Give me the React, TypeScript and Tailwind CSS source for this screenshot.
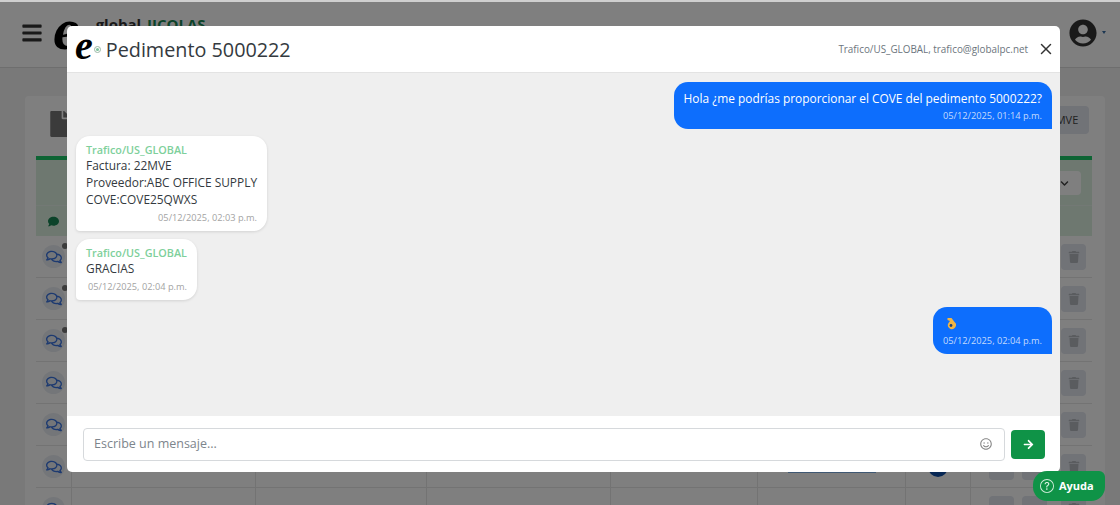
import React from "react";
import { FaBars, FaUserCircle, FaRegComments, FaTrash, FaComment, FaFile, FaArrowRight, FaRegSmile, FaChevronDown } from "react-icons/fa";
import { BsQuestionCircle } from "react-icons/bs";
import { X } from "lucide-react";

const font = { fontFamily: '"Open Sans","Noto Sans",sans-serif' };

function Logo({ cls }: { cls: string }) {
  return <span className={"font-['Liberation_Serif'] italic font-bold leading-none text-black " + cls}>e</span>;
}

function Action({ hidden }: { hidden?: boolean }) {
  return (
    <span className="flex h-[26px] w-[25px] items-center justify-center rounded-[4px] bg-[#e2e6ee] text-[#b4b8be]">
      {!hidden && <FaTrash size={12} />}
    </span>
  );
}

function Row({ dot, badge }: { dot?: boolean; badge?: boolean }) {
  return (
    <div className="grid h-[42px] shrink-0 grid-cols-[35px_184px_171px_184px_147px_148px_65px_1fr] border-b border-[#e6e6e6]">
      <div className="relative flex items-center justify-center">
        <div className="flex h-[23px] w-[23px] items-center justify-center rounded-full bg-[#e9edf3] text-[#3a74e0]"><FaRegComments size={16} /></div>
        {dot && <span className="absolute right-[3px] top-[7px] h-[6px] w-[6px] rounded-full bg-[#777]" />}
      </div>
      <div className="border-l border-[#e6e6e6]" />
      <div className="border-l border-[#e6e6e6]" />
      <div className="border-l border-[#e6e6e6]" />
      <div className="border-l border-[#e6e6e6]" />
      <div className="flex items-end justify-center border-l border-[#e6e6e6] pb-[14px]">{badge && <span className="h-[2px] w-[88px] bg-[#7fb0e6]" />}</div>
      <div className="flex items-center justify-center border-l border-[#e6e6e6]">{badge && <span className="h-[20px] w-[20px] rounded-full bg-[#0f4fa8]" />}</div>
      <div className="flex items-center gap-[8px] border-l border-[#e6e6e6] pl-[18px]">
        <Action hidden />
        <Action hidden />
        <span className="ml-[6px]"><Action /></span>
      </div>
    </div>
  );
}

function Bubble({ mine, children, time }: { mine?: boolean; children: React.ReactNode; time: string }) {
  if (mine) {
    return (
      <div className="rounded-[14px] rounded-br-none bg-[#0d6efd] pb-[6px] pl-[10px] pr-[10px] pt-[8px] text-white">
        {children}
        <div className="mt-[3px] text-right text-[9.25px] leading-[14px] text-[#c4dafc]">{time}</div>
      </div>
    );
  }
  return (
    <div className="rounded-[14px] rounded-bl-[4px] bg-white px-[10px] pb-[6px] pt-[7px] text-[#343a40] shadow-[0_1px_3px_rgba(0,0,0,0.12)]">
      <div className="text-[10.8px] font-semibold leading-[14px] text-[#7ed09b]">Trafico/US_GLOBAL</div>
      {children}
      <div className="mt-[3px] text-right text-[9.25px] leading-[14px] text-[#a3a3a3]">{time}</div>
    </div>
  );
}

export default function App() {
  return (
    <div style={font} className="relative h-[505px] w-[1120px] overflow-hidden bg-[#f3f3f3]">
      {/* Page behind the dialog */}
      <div className="flex h-[68px] items-center justify-between border-b border-[#ddd] bg-white pl-[21px] pr-[14px] pt-[2px]">
        <div className="flex items-center pb-[4px]">
          <FaBars size={22} className="text-[#333]" />
          <Logo cls="ml-[10px] text-[60px] -mt-[8px]" />
          <span className="mb-[16px] ml-[16px] text-[15px] font-bold text-[#333]">global<span className="ml-[6px] text-[#198754]">IICOLAS</span></span>
        </div>
        <div className="flex items-center gap-[5px] pb-[4px]">
          <FaUserCircle size={28} className="text-[#333]" />
          <span className="h-0 w-0 border-x-[2px] border-t-[3px] border-x-transparent border-t-[#3a6ea5]" />
        </div>
      </div>
      <div className="pl-[25px] pr-[15px] pt-[28px]">
        <div className="flex h-[420px] flex-col rounded-[4px] bg-white pl-[11px] pr-[13px] pt-[10px]">
          <div className="flex h-[50px] shrink-0 items-start justify-between">
            <FaFile size={26} className="ml-[11px] mt-[5px] text-[#777]" />
            <span className="mr-[3px] flex h-[28px] w-[44px] items-center justify-center rounded-[4px] bg-[#e2e6ee] text-[11px] text-[#444]">MVE</span>
          </div>
          <div className="flex h-[80px] shrink-0 flex-col border-t-4 border-[#1dc968] bg-[#dcf0e0]">
            <div className="flex h-[46px] justify-end border-b border-[#e7f3ea] pr-[11px] pt-[11px]">
              <span className="flex h-[24px] w-[42px] items-center justify-center rounded-[4px] bg-white pl-[8px] text-[#444]"><FaChevronDown size={9} /></span>
            </div>
            <div className="flex flex-1 items-center pl-[12px] text-[#198754]"><FaComment size={11} /></div>
          </div>
          <Row dot /><Row dot /><Row dot /><Row /><Row /><Row badge /><Row />
        </div>
      </div>
      <div className="absolute inset-x-0 top-0 h-[2px] bg-[#cfcfcf]" />

      {/* Overlay and dialog */}
      <div className="absolute inset-x-0 bottom-0 top-[2px] flex justify-center bg-black/50 pt-[24px]">
        <div className="ml-[7px] flex h-[446px] w-[993px] flex-col overflow-hidden rounded-[5px] bg-white">
          <div className="flex h-[47px] shrink-0 items-center justify-between border-b border-[#e3e3e3] pl-[8px] pr-[5px]">
            <div className="flex items-center">
              <Logo cls="text-[40px] -mt-[7px]" />
              <span className="ml-[1px] mr-[5px] flex h-[7px] w-[7px] items-center justify-center rounded-full border border-[#9ab8a6]"><span className="h-[3px] w-[3px] rounded-full bg-[#7ac29a]" /></span>
              <span className="mt-[2px] text-[19.8px] leading-none text-[#343a40]">Pedimento 5000222</span>
            </div>
            <div className="flex items-center gap-[9px]">
              <span className="text-[9.9px] text-[#6c757d]">Trafico/US_GLOBAL, trafico@globalpc.net</span>
              <X size={18} strokeWidth={2} className="text-[#333]" />
            </div>
          </div>
          <div className="flex flex-1 flex-col bg-[#efefef] pl-[9px] pr-[8px] pt-[9px]">
            <div className="flex justify-end">
              <Bubble mine time="05/12/2025, 01:14 p.m.">
                <div className="text-[11.9px] leading-[16px]">Hola ¿me podrías proporcionar el COVE del pedimento 5000222?</div>
              </Bubble>
            </div>
            <div className="mt-[7px] flex">
              <Bubble time="05/12/2025, 02:03 p.m.">
                <div className="whitespace-pre-line text-[11.9px] leading-[17px]">{"Factura: 22MVE\nProveedor:ABC OFFICE SUPPLY\nCOVE:COVE25QWXS"}</div>
              </Bubble>
            </div>
            <div className="mt-[8px] flex">
              <Bubble time="05/12/2025, 02:04 p.m.">
                <div className="text-[11.9px] leading-[17px]">GRACIAS</div>
              </Bubble>
            </div>
            <div className="mt-[7px] flex justify-end">
              <Bubble mine time="05/12/2025, 02:04 p.m.">
                <div className="flex h-[16px] items-center pl-[3px]">
                  <svg width="10" height="13" viewBox="0 0 10 13">
                    <path d="M1.5 1 L5.5 1 L8.5 5 A4 4 0 1 1 2.5 6 L4 4 L1.5 3Z" fill="#f2b544" />
                    <circle cx="5" cy="8.5" r="1.4" fill="#1f3f77" />
                  </svg>
                </div>
              </Bubble>
            </div>
          </div>
          <div className="flex h-[56px] shrink-0 items-center gap-[6px] pl-[16px] pr-[15px]">
            <div className="flex h-[33px] flex-1 items-center justify-between rounded-[4px] border border-[#d6d9dc] pl-[10px] pr-[12px]">
              <span className="text-[12.5px] text-[#7d858c]">Escribe un mensaje...</span>
              <FaRegSmile size={12} className="text-[#888]" />
            </div>
            <span className="flex h-[29px] w-[34px] items-center justify-center rounded-[4px] bg-[#0f9347] text-white"><FaArrowRight size={11} /></span>
          </div>
        </div>
      </div>

      {/* Help pill */}
      <div className="absolute bottom-[4px] right-[15px] flex h-[30px] w-[72px] items-center gap-[5px] rounded-[14px] rounded-tr-[6px] bg-[#0f9347] pl-[7px] text-[11px] font-bold text-white">
        <BsQuestionCircle size={14} className="shrink-0 text-[#d5eede]" />
        Ayuda
      </div>
    </div>
  );
}
